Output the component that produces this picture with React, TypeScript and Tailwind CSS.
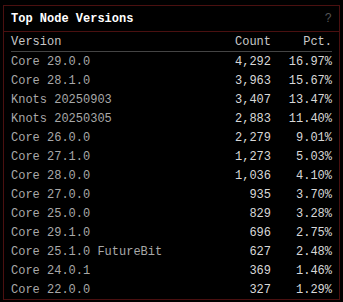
const rows: [string, string, string][] = [
	["Core 29.0.0", "4,292", "16.97%"],
	["Core 28.1.0", "3,963", "15.67%"],
	["Knots 20250903", "3,407", "13.47%"],
	["Knots 20250305", "2,883", "11.40%"],
	["Core 26.0.0", "2,279", "9.01%"],
	["Core 27.1.0", "1,273", "5.03%"],
	["Core 28.0.0", "1,036", "4.10%"],
	["Core 27.0.0", "935", "3.70%"],
	["Core 25.0.0", "829", "3.28%"],
	["Core 29.1.0", "696", "2.75%"],
	["Core 25.1.0 FutureBit", "627", "2.48%"],
	["Core 24.0.1", "369", "1.46%"],
	["Core 22.0.0", "327", "1.29%"],
];

export default function App() {
	return (
		<div className="h-[302px] w-[343px] bg-black px-[3px] pt-[5px] pb-[2px] font-['Liberation_Mono',monospace] text-[12px]">
			<div className="h-full border border-[#4a1010]">
				<div className="flex h-[26px] items-center justify-between border-b border-[#4a1010] px-[7px]">
					<h2 className="font-bold text-white">Top Node Versions</h2>
					<span className="text-[#555]">?</span>
				</div>
				<div className="px-[7px]">
					<div className="flex h-[20px] items-center border-b border-[#444] text-[#c8c8c8]">
						<span className="flex-1">Version</span>
						<span className="w-[60px] text-right">Count</span>
						<span className="w-[61px] text-right">Pct.</span>
					</div>
					{rows.map(([name, count, pct]) => (
						<div key={name} className="flex h-[19px] items-center">
							<span className="flex-1 text-[#a8a8a8]">{name}</span>
							<span className="w-[60px] text-right text-[#d8d8d8]">{count}</span>
							<span className="w-[61px] text-right text-[#d8d8d8]">{pct}</span>
						</div>
					))}
				</div>
			</div>
		</div>
	);
}
